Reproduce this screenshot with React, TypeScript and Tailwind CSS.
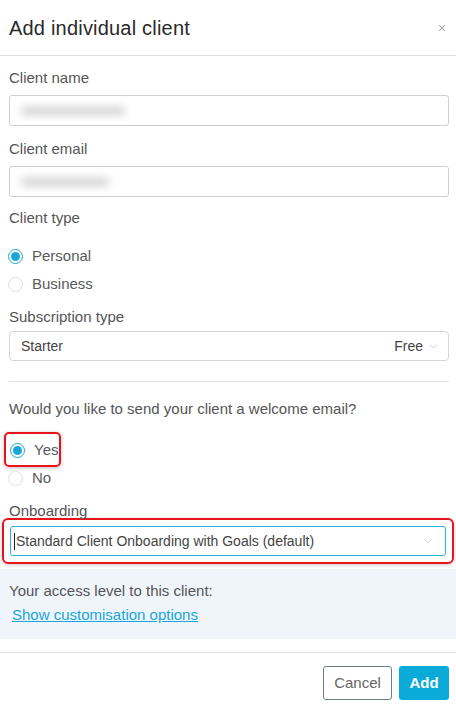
import { ChevronDown, X } from "lucide-react";

function Radio({ label, checked }: { label: string; checked?: boolean }) {
  return (
    <div className="flex items-center h-[28px]">
      <span
        className={`w-[15px] h-[15px] rounded-full border flex items-center justify-center ${
          checked ? "border-[#1ba6d9]" : "border-[#dedede]"
        }`}
      >
        {checked && <span className="w-[9px] h-[9px] rounded-full bg-[#1ba6d9]" />}
      </span>
      <span className="ml-[9px] text-[15px] text-[#5a5a5a]">{label}</span>
    </div>
  );
}

function BlurInput({ w }: { w: number }) {
  return (
    <div className="h-[31px] border border-[#cfcfcf] rounded-[3px] flex items-center px-[11px]">
      <div className="h-[8px] rounded-full bg-[#cfcfcf] blur-[4px]" style={{ width: w }} />
    </div>
  );
}

export default function App() {
  return (
    <div className="w-[456px] h-[710px] bg-white font-['Liberation_Sans',sans-serif] text-[#444] overflow-hidden">
      {/* Header */}
      <div className="h-[56px] border-b border-[#dedede] px-[9px] flex items-center justify-between">
        <h1 className="text-[20px] text-[#2a2a2a] tracking-[0.2px]">Add individual client</h1>
        <X size={10} strokeWidth={2.5} className="text-[#999]" />
      </div>

      <div className="pl-[9px] pr-[7px]">
        <p className="mt-[12px] text-[15px] leading-[20px] text-[#555]">Client name</p>
        <div className="mt-[7px]">
          <BlurInput w={104} />
        </div>

        <p className="mt-[13px] text-[15px] leading-[20px] text-[#555]">Client email</p>
        <div className="mt-[7px]">
          <BlurInput w={88} />
        </div>

        <p className="mt-[11px] text-[15px] leading-[20px] text-[#555]">Client type</p>
        <div className="mt-[14px] -ml-[1px]">
          <Radio label="Personal" checked />
          <Radio label="Business" />
        </div>

        <p className="mt-[9px] text-[15px] leading-[20px] text-[#555]">Subscription type</p>
        <div className="mt-[4px] h-[30px] border border-[#d6d6d6] rounded-[4px] flex items-center pl-[11px] pr-[8px] text-[14px] text-[#444]">
          <span>Starter</span>
          <span className="ml-auto">Free</span>
          <ChevronDown size={13} strokeWidth={1.2} className="ml-[4px] text-[#b5b5b5]" />
        </div>

        <div className="mt-[20px] border-t border-[#e3e3e3]" />

        <p className="mt-[17px] text-[15px] leading-[20px] text-[#555]">
          Would you like to send your client a welcome email?
        </p>
        <div className="mt-[13px] -ml-[5px] w-[57px] h-[35px] pl-[4px] pt-[2px] border-2 border-[#e8141b] rounded-[5px] shadow-[0_1px_4px_rgba(0,0,0,0.25)] flex items-center">
          <Radio label="Yes" checked />
        </div>
        <div className="-mt-[3px] -ml-[1px]">
          <Radio label="No" />
        </div>

        <p className="mt-[9px] text-[15px] leading-[20px] text-[#555]">Onboarding</p>
      </div>

      <div className="-mt-[3px] mx-[2px] p-[6px] border-2 border-[#e8141b] rounded-[6px] shadow-[0_1px_4px_rgba(0,0,0,0.2)]">
        <div className="h-[30px] border border-[#2bb3dc] rounded-[3px] flex items-center pl-[3px] pr-[10px] text-[14px] text-[#444]">
          <span className="w-px h-[17px] bg-[#222] mr-[1px]" />
          <span>Standard Client Onboarding with Goals (default)</span>
          <ChevronDown size={14} strokeWidth={1.2} className="ml-auto text-[#b5b5b5]" />
        </div>
      </div>

      {/* Access level */}
      <div className="mt-[5px] h-[70px] bg-[#f0f5fb] px-[9px] pt-[12px]">
        <p className="text-[15px] leading-[20px] text-[#555]">Your access level to this client:</p>
        <a className="mt-[4px] ml-[3px] block text-[15px] leading-[20px] text-[#1ba6d9] underline">
          Show customisation options
        </a>
      </div>

      {/* Footer */}
      <div className="mt-[13px] border-t border-[#dedede] px-[7px] pt-[13px] flex justify-end gap-[7px]">
        <button className="h-[34px] w-[69px] border border-[#6f7b86] rounded-[3px] text-[15px] text-[#666]">
          Cancel
        </button>
        <button className="h-[34px] w-[50px] rounded-[3px] bg-[#0aabd9] text-white text-[15px] font-bold">
          Add
        </button>
      </div>
    </div>
  );
}
